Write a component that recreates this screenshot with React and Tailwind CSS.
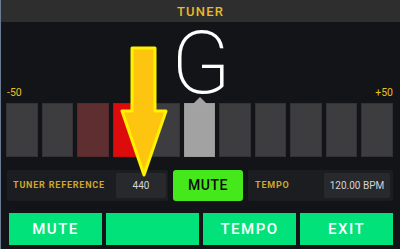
import React from "react";

const font = { fontFamily: "Roboto, 'Liberation Sans', sans-serif" };

function Bar({ color, pointer }) {
  return (
    <div className={`relative flex-1 h-[54px] border ${color}`}>
      {pointer && (
        <svg
          className="absolute left-1/2 -translate-x-1/2 -top-[7px]"
          width="16"
          height="8"
          viewBox="0 0 16 8"
        >
          <polygon points="0,8 8,0 16,8" fill="#a3a3a3" />
        </svg>
      )}
    </div>
  );
}

export default function App() {
  const gray = "bg-[#3d3d3f] border-[#333335]";
  const bars = [
    gray,
    gray,
    "bg-[#5e2e31] border-[#542a2c]",
    "bg-[#dd0b0b] border-[#c80a0a]",
    gray,
    "bg-[#a2a2a2] border-[#989898]",
    gray,
    gray,
    gray,
    gray,
    gray,
  ];
  return (
    <div
      className="relative w-[400px] h-[249px] bg-[#131417] border-l border-[#6b7b92] overflow-hidden flex flex-col"
      style={font}
    >
      <div className="h-[22px] bg-[#2e2e2f] flex items-center justify-center">
        <span className="text-[13px] font-medium tracking-[1.2px] text-[#eab925] leading-none">
          TUNER
        </span>
      </div>

      <div className="h-[64px] flex justify-center">
        <span className="block text-[87px] leading-[64px] pt-[9px] font-[200] text-white pl-[1px]">
          G
        </span>
      </div>

      <div className="h-[17px] flex justify-between pl-[6px] pr-[7px] pt-[1px] text-[10.5px] leading-[12px] text-[#e8c020]">
        <span>-50</span>
        <span>+50</span>
      </div>

      <div className="flex gap-[4px] pl-[5px] pr-[7px]">
        {bars.map((c, i) => (
          <Bar key={i} color={c} pointer={i === 5} />
        ))}
      </div>

      <div className="mt-[13px] h-[31px] flex gap-[5px] pl-[6px] pr-[7px]">
        <div className="w-[161px] bg-[#1c1d20] rounded-[2px] flex items-center justify-between pl-[6px] pr-[2px]">
          <span className="text-[9px] font-bold tracking-[0.8px] text-[#cfa52a]">
            TUNER REFERENCE
          </span>
          <div className="w-[50px] h-[25px] bg-[#28292c] rounded-[2px] flex items-center justify-center text-[10px] text-[#d4d4d4]">
            440
          </div>
        </div>
        <div className="w-[70px] bg-[#45e81b] rounded-[3px] flex items-center justify-center text-[14px] font-medium tracking-[0.5px] text-[#0b0b0b]">
          MUTE
        </div>
        <div className="flex-1 bg-[#1c1d20] rounded-[2px] flex items-center justify-between pl-[7px] pr-[3px]">
          <span className="text-[9px] font-bold tracking-[0.8px] text-[#cfa52a]">
            TEMPO
          </span>
          <div className="w-[66px] h-[25px] bg-[#28292c] rounded-[2px] flex items-center justify-center text-[10px] text-[#d4d4d4]">
            120.00 BPM
          </div>
        </div>
      </div>

      <div className="mt-[12px] h-[32px] flex gap-[4px] pl-[8px] pr-[7px]">
        {["MUTE", "", "TEMPO", "EXIT"].map((t, i) => (
          <div
            key={i}
            className="flex-1 bg-[#02e27b] flex items-center justify-center text-[15px] font-medium tracking-[1.5px] text-white"
          >
            {t}
          </div>
        ))}
      </div>

      <svg
        className="absolute left-0 top-0 pointer-events-none"
        width="400"
        height="249"
        viewBox="0 0 400 249"
      >
        <polygon
          points="131,48 154,48 154,111 165,111 143,175 121,111 131,111"
          fill="#fdc50f"
          stroke="#fff200"
          strokeWidth="3"
          strokeLinejoin="round"
        />
      </svg>
    </div>
  );
}
